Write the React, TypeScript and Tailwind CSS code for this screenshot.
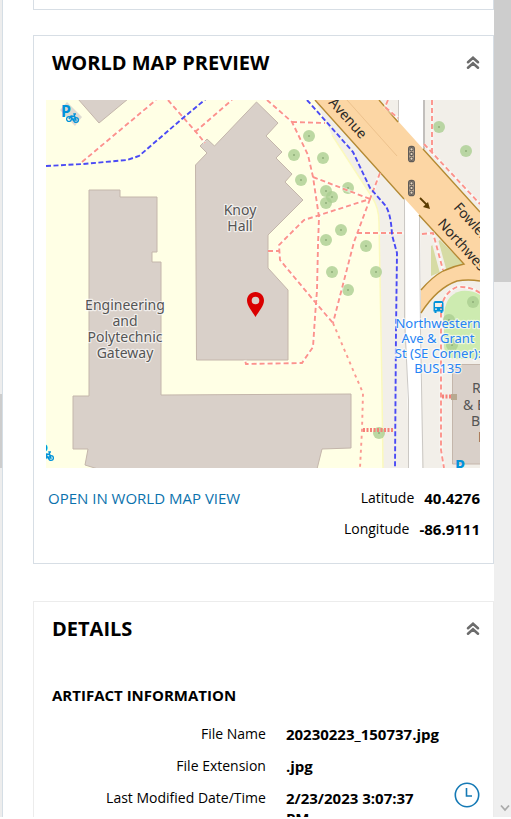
import type { ReactNode } from "react";

const trees: [number, number][] = [
  [309, 136], [294, 155], [323, 158], [301, 180], [326, 191], [326, 203],
  [332, 197], [348, 188], [341, 230], [326, 240], [366, 246], [376, 272],
  [332, 272], [348, 290], [439, 127], [466, 151], [473, 302], [449, 320],
  [452, 345], [379, 433],
];

const footpaths = [
  "M82 162L156 100",
  "M168 100L196 132L205 143",
  "M195 132L232 100",
  "M267 100L292 122L308 155L313 177L319 217L318 245L317 290L315 317L313 347L302 363L246 364L245 360",
  "M292 122L325 123",
  "M313 177L370 199",
  "M380 173L370 199L304 220L294 230L279 245L280 260L315 302L333 323",
  "M268 251H279",
  "M370 199L354 242L333 323",
  "M357 233H404",
  "M422 234L433 233L443 270",
  "M432 100V155",
  "M424 144L480 204",
  "M388 100L385 107L398 118",
  "M480 293Q470 286 457 287Q443 293 441 310V450L444 468",
];

function Bike({ x, y }: { x: number; y: number }) {
  return (
    <g transform={`translate(${x} ${y})`} fill="none" stroke="#0092da" strokeWidth="1.3">
      <circle cx="0" cy="0" r="2.4" />
      <circle cx="7" cy="1" r="2.4" />
      <path d="M0 0L2 -3L6 -2.5M2 -3L4 1L7 1L5 -5H7" />
    </g>
  );
}

function Signal({ y }: { y: number }) {
  return (
    <g fill="none" stroke="#5f5b57" strokeWidth="1.2">
      <rect x="408.6" y={y - 7.7} width="5.8" height="15.4" rx="2.5" fill="#cdb79d" />
      <circle cx="411.5" cy={y - 4.7} r="1.7" fill="#eadbc6" />
      <circle cx="411.5" cy={y} r="1.7" fill="#eadbc6" />
      <circle cx="411.5" cy={y + 4.7} r="1.7" fill="#eadbc6" />
    </g>
  );
}

function Label({ x, y, lines, step, className }: { x: number; y: number; lines: string[]; step: number; className: string }) {
  return (
    <text
      textAnchor="middle"
      stroke="#fff"
      strokeOpacity="0.65"
      strokeWidth="2.4"
      strokeLinejoin="round"
      paintOrder="stroke"
      className={className}
    >
      {lines.map((line, i) => (
        <tspan key={line} x={x} y={y + i * step}>
          {line}
        </tspan>
      ))}
    </text>
  );
}

function CampusMap() {
  return (
    <svg
      viewBox="46 100 434 368"
      preserveAspectRatio="xMidYMid slice"
      role="img"
      aria-label="Map centred on Knoy Hall"
      className="block h-[368px] w-full font-['Noto_Sans',sans-serif]"
    >
      <rect x="46" y="100" width="434" height="368" fill="#f2efe9" />
      <path d="M46 100H315L332 135L372 197Q379 208 379 222L382 390L383 430V468H46Z" fill="#ffffe5" />
      <path d="M332 135L372 197Q379 208 379 222L382 390L383 468" fill="none" stroke="#fbf9bd" strokeWidth="1.5" />

      <g fill="#d9d0c9" stroke="#c4b6ab" strokeWidth="1">
        <path d="M78 99L99 123L128 99Z" />
        <path d="M89 190H120V197H157V252H152V262H161V395L351 394V448L322 449L317 469H98L85 465L88 449H73V396H89Z" />
        <path d="M256.500 102L278 123L266 136L282 152L276 158L292 174L285 182L303 200L268 235V268L288 290V360H196.500L195.500 165L207 153L200 146L207 139L214.500 146Z" />
      </g>

      <path d="M431 246L440 240L464 264L443 271L431 276Z" fill="#d6dba4" />
      <path d="M433 234L443 271" stroke="#f2efe9" strokeWidth="7" />
      <path d="M480 295Q472 290 461 291Q444 295 444 318V345Q444 359 458 359H480Z" fill="#cdebb0" />
      <path d="M452.500 364.500H481V464H452.500Z" fill="#d9d0c9" stroke="#c4b6ab" />

      <path d="M399 100H424V149L420 215L421 330L422 468H409L406 330L405 199L399 122Z" fill="#fff" />
      <path d="M398.500 100V122M404.500 199V320L408.500 400V468M419.500 216V240L420.500 330L423 468" fill="none" stroke="#cbc8c4" />
      <path d="M424 100V149" stroke="#c2bfbc" strokeWidth="2" />

      <path d="M315 100H379L480 212V281Q468 279 457 281Q437 288 421 313V290Q432 277 443 271Q454 266 464 264Z" fill="#fcd6a4" />
      <path
        d="M315 100L404 199M419 215L464 264Q454 266 443 271Q432 277 421 290M379 100L398 122M423 149L480 212M480 281Q468 279 457 281Q437 288 421 313"
        fill="none"
        stroke="#b58a33"
        strokeWidth="1.4"
      />
      <path d="M347 100L397 156" stroke="#e8bd86" strokeWidth="0.8" />

      {trees.map(([x, y]) => (
        <g key={`${x}-${y}`}>
          <circle cx={x} cy={y} r="6" fill="#a9cd90" fillOpacity="0.78" />
          <circle cx={x} cy={y} r="1" fill="#8fae78" />
        </g>
      ))}

      <g fill="none" stroke="#fff" strokeOpacity="0.5" strokeWidth="3">
        {footpaths.map((d) => (
          <path key={d} d={d} />
        ))}
      </g>
      <g fill="none" stroke="#fc938b" strokeWidth="1.9" strokeDasharray="5 3">
        {footpaths.map((d) => (
          <path key={d} d={d} />
        ))}
      </g>
      <path d="M333 323L353 370L363 393L362 430L360 468" fill="none" stroke="#fb9a92" strokeWidth="1.9" strokeDasharray="3 4" />
      <path d="M363 430H394M442 396.500H452" stroke="#f58078" strokeWidth="4" strokeDasharray="2 1.500" />
      <rect x="451" y="394" width="6" height="6" fill="#b8a990" />

      <g fill="none" stroke="#4a4af5" strokeWidth="1.9" strokeDasharray="5 2.500">
        <path d="M46 166L83 164L127 160L139 156L183 118L207 98" />
        <path d="M307 100L353 152L370 188L385 205Q391 213 392 235L397 253L396 330L395 468" />
      </g>

      <Signal y={154} />
      <Signal y={188} />
      <path d="M420 198L427 205" stroke="#5b3c00" strokeWidth="1.8" />
      <path d="M430 209L428 202L423 207Z" fill="#5b3c00" />

      <g className="fill-[#2d2a26] text-[14px]">
        <text transform="translate(328 103) rotate(48)">Avenue</text>
        <text transform="translate(453 208) rotate(48)">Fowler</text>
        <text transform="translate(437 224) rotate(48)">Northwestern</text>
      </g>

      <Label x={240} y={215} step={16} lines={["Knoy", "Hall"]} className="fill-[#555] text-[14px]" />
      <Label x={125} y={310} step={16} lines={["Engineering", "and", "Polytechnic", "Gateway"]} className="fill-[#555] text-[14px]" />
      <Label
        x={438}
        y={328}
        step={15}
        lines={["Northwestern", "Ave & Grant", "St (SE Corner):", "BUS135"]}
        className="fill-[#2684f5] text-[13px]"
      />
      <g className="fill-[#555] text-[14px]">
        <text x="472" y="393">R</text>
        <text x="463" y="410">&amp; E</text>
        <text x="471" y="426">B</text>
        <text x="478" y="442">H</text>
      </g>

      <path
        fillRule="evenodd"
        fill="#0092da"
        d="M433.500 303Q433.500 301 435.500 301H441.500Q443.500 301 443.500 303V311.500H442.500V313H440.500V311.500H436.500V313H434.500V311.500H433.500ZM435 303V307H442V303ZM435 308.500V309.800H437V308.500ZM440 308.500V309.800H442V308.500Z"
      />
      <path d="M67 102L82 117L75 126L60 110Z" fill="#dedbd3" />
      <text x="61" y="117" className="fill-[#0092da] text-[16px] font-bold">P</text>
      <Bike x={69} y={119} />
      <text x="455" y="472" className="fill-[#0092da] text-[16px] font-bold">P</text>
      <text x="38" y="456" className="fill-[#0092da] text-[16px] font-bold">P</text>
      <Bike x={44} y={457} />

      <path
        fillRule="evenodd"
        fill="#da0000"
        d="M255.500 292C250.500 292 247 295.800 247 300.500C247 306 252 311 255.500 317C259 311 264 306 264 300.500C264 295.800 260.500 292 255.500 292ZM255.500 296.700A3.800 3.800 0 1 1 255.500 304.300A3.800 3.800 0 1 1 255.500 296.700Z"
      />
    </svg>
  );
}

function CollapseButton({ label }: { label: string }) {
  return (
    <button type="button" aria-label={label} className="flex h-6 w-4 items-center justify-center">
      <svg viewBox="0 0 14 14" className="h-[14px] w-[14px]" fill="none" stroke="#6c6c6c" strokeWidth="2.600" strokeLinecap="round">
        <path d="M2 6.200L7 1.800L12 6.200M2 11.700L7 7.300L12 11.700" />
      </svg>
    </button>
  );
}

function CardHeader({ title }: { title: string }) {
  return (
    <div className="flex items-center justify-between pr-3 pl-[18px]">
      <h2 className="text-[20px] leading-6 font-bold">{title}</h2>
      <CollapseButton label={`Collapse ${title}`} />
    </div>
  );
}

function DetailRow({ label, value, action }: { label: string; value: string; action?: ReactNode }) {
  return (
    <div className="flex">
      <dt className="w-[52%] shrink-0 text-right text-[14px]">{label}</dt>
      <dd className="flex min-w-0 flex-1 justify-between pl-5 font-bold">
        <span className={action ? "w-36" : ""}>{value}</span>
        {action}
      </dd>
    </div>
  );
}

export default function App() {
  return (
    <div className="flex h-screen overflow-hidden border-b-2 border-white bg-white font-['Open_Sans','Noto_Sans',sans-serif] text-[15px] leading-5 text-black">
      <div className="flex w-[3px] shrink-0 flex-col border-r border-[#d5dee5] bg-[#ededed]">
        <div className="mt-[394px] h-[74px] bg-[#cdcdcd]" />
      </div>

      <main className="min-w-0 flex-1 overflow-hidden pl-[30px]">
        <div className="h-[10px] border border-t-0 border-[#d7dee5]" />

        <section className="mt-[25px] border border-[#d7dee5] pt-[15px] pb-6">
          <CardHeader title="WORLD MAP PREVIEW" />
          <div className="mt-[25px] pr-[13px] pl-3">
            <CampusMap />
            <div className="mt-5 flex items-start justify-between">
              <a href="#map" className="pl-0.5 text-[#0b72ad]">
                OPEN IN WORLD MAP VIEW
              </a>
              <dl className="flex flex-col gap-[11px]">
                <div className="flex justify-end gap-2.5">
                  <dt className="text-[14px]">Latitude</dt>
                  <dd className="font-bold">40.4276</dd>
                </div>
                <div className="flex justify-end gap-2.5">
                  <dt className="text-[14px]">Longitude</dt>
                  <dd className="font-bold">-86.9111</dd>
                </div>
              </dl>
            </div>
          </div>
        </section>

        <section className="mt-[37px] border border-[#ececec] pt-[15px] pb-6">
          <CardHeader title="DETAILS" />
          <h3 className="mt-11 pl-[18px] text-[15px] font-bold">ARTIFACT INFORMATION</h3>
          <dl className="mt-[19px] flex flex-col gap-3 pr-[13px]">
            <DetailRow label="File Name" value="20230223_150737.jpg" />
            <DetailRow label="File Extension" value=".jpg" />
            <DetailRow
              label="Last Modified Date/Time"
              value="2/23/2023 3:07:37 PM"
              action={
                <button type="button" aria-label="View in timeline" className="-mt-1.5 h-[26px] w-[26px] shrink-0">
                  <svg viewBox="0 0 26 26" fill="none" stroke="#1479b5" strokeWidth="1.600">
                    <circle cx="13" cy="13" r="11.700" />
                    <path d="M12.500 6V14H18" />
                  </svg>
                </button>
              }
            />
          </dl>
        </section>
      </main>

      <div className="flex w-[17px] shrink-0 flex-col items-center justify-between bg-[#efefef]">
        <div className="h-[282px] w-full bg-[#cdcdcd]" />
        <svg viewBox="0 0 10 10" className="mb-1 ml-1 h-[10px] w-[10px]" fill="none" stroke="#aaa" strokeWidth="1.800">
          <path d="M1 2.500L5 7L9 2.500" />
        </svg>
      </div>
    </div>
  );
}
